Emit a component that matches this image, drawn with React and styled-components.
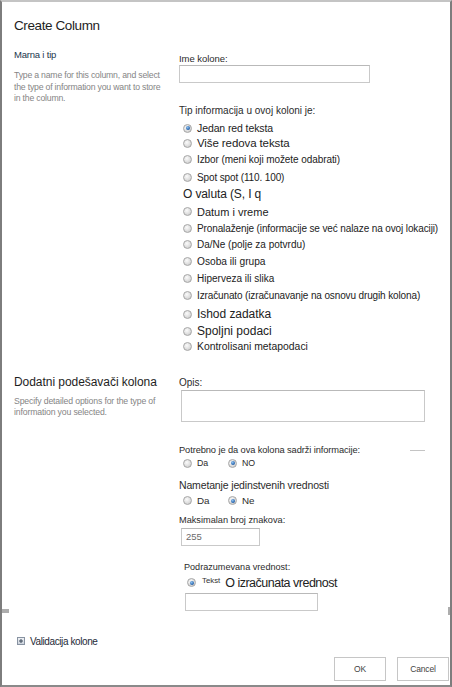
import React from 'react';
import styled, { createGlobalStyle } from 'styled-components';

const GlobalStyle = createGlobalStyle`
  html, body {
    margin: 0;
    padding: 0;
    background: #fff;
  }
  body {
    font-family: "Liberation Sans", Arial, sans-serif;
  }
`;

const Window = styled.div`
  box-sizing: border-box;
  width: 452px;
  height: 687px;
  border-top: 2px solid #c4c4c4;
  border-left: 2px solid #7d7d7d;
  border-right: 2px solid #7d7d7d;
  border-bottom: 2px solid #8a8a8a;
  padding-top: 13.5px;
  display: flex;
  flex-direction: column;
  overflow: hidden;
  color: #262626;
`;

const Title = styled.h1`
  margin: 0;
  padding-left: 12px;
  font-size: 13.5px;
  font-weight: normal;
  letter-spacing: -0.4px;
  line-height: 20px;
  color: #1e1e1e;
`;

const Section = styled.section`
  display: grid;
  grid-template-columns: 165px 1fr;
  padding-left: 12px;
  margin-top: ${p => p.$mt}px;
`;

const InfoCol = styled.div`
  padding-top: ${p => p.$pt || 0}px;
`;

const FieldsCol = styled.div`
  display: flex;
  flex-direction: column;
  align-items: flex-start;
  padding-top: ${p => p.$pt || 0}px;
`;

const SectionTitle = styled.div`
  font-size: ${p => p.$size}px;
  letter-spacing: ${p => p.$ls || 0}px;
  line-height: ${p => p.$lh}px;
  color: ${p => p.$color || '#1e1e1e'};
  white-space: nowrap;
`;

const SectionDesc = styled.div`
  margin-top: ${p => p.$mt}px;
  font-size: 8.7px;
  letter-spacing: ${p => p.$ls}px;
  line-height: ${p => p.$lh}px;
  color: #858585;
  white-space: nowrap;
`;

const FieldLabel = styled.div`
  display: flex;
  align-items: center;
  margin-top: ${p => p.$mt || 0}px;
  margin-left: ${p => p.$ml || 0}px;
  font-size: ${p => p.$size || 10}px;
  letter-spacing: ${p => p.$ls || 0}px;
  line-height: ${p => p.$lh || 12}px;
  color: #2b2b2b;
  white-space: nowrap;
`;

const Rule = styled.span`
  width: 15px;
  height: 1px;
  margin-left: 50px;
  background: #c4c4c4;
`;

const TextBox = styled.input`
  box-sizing: border-box;
  display: block;
  width: ${p => p.$w}px;
  height: 18px;
  margin: ${p => p.$mt || 0}px 0 0 ${p => p.$ml || 0}px;
  padding: 0 4px;
  border: 1px solid #c9c9c9;
  border-top-color: #b9b9b9;
  background: #fff;
  font-family: "Liberation Sans", Arial, sans-serif;
  font-size: 9.5px;
  color: #6a6a6a;
  outline: none;
`;

const TextArea = styled.textarea`
  box-sizing: border-box;
  display: block;
  width: 244px;
  height: 32px;
  margin: 1px 0 0 2px;
  border: 1px solid #c9c9c9;
  border-top-color: #b9b9b9;
  resize: none;
  outline: none;
  background: #fff;
`;

const Radio = styled.span`
  box-sizing: border-box;
  position: relative;
  flex: none;
  width: 9px;
  height: 9px;
  border-radius: 50%;
  border: 1px solid #a6a6a6;
  background: radial-gradient(circle at 40% 35%, #fbfbfb 0%, #dedede 55%, #c2c2c2 100%);

  &::after {
    content: '';
    display: ${p => (p.$checked ? 'block' : 'none')};
    position: absolute;
    left: 1.5px;
    top: 1.5px;
    width: 4px;
    height: 4px;
    border-radius: 50%;
    background: radial-gradient(circle at 40% 35%, #8cc0f0 0%, #2a66ad 65%, #1b4a85 100%);
  }
`;

const TypeOption = styled.label`
  display: flex;
  align-items: center;
  gap: 5px;
  height: 16px;
  margin-top: ${p => p.$mt || 0}px;
  padding-left: 4px;
  white-space: nowrap;
`;

const OptionText = styled.span`
  font-size: ${p => p.$size}px;
  letter-spacing: ${p => p.$ls || 0}px;
  color: #222;
`;

const ChoiceRow = styled.div`
  display: flex;
  align-items: center;
  height: ${p => p.$h}px;
  margin-top: ${p => p.$mt}px;
  padding-left: ${p => p.$pl || 4}px;
`;

const Choice = styled.label`
  display: flex;
  align-items: center;
  gap: 5px;
  width: 45px;
`;

const ChoiceText = styled.span`
  font-size: ${p => p.$size}px;
  letter-spacing: ${p => p.$ls || 0}px;
  color: #2b2b2b;
`;

const DefaultValueRow = styled.div`
  display: flex;
  align-items: center;
  height: 16px;
  margin-top: 1.7px;
  padding-left: 8px;
`;

const TinyText = styled.span`
  margin: -4px 5px 0 6px;
  font-size: 7.8px;
  color: #333;
`;

const BigText = styled.span`
  font-size: 12.5px;
  letter-spacing: -0.5px;
  color: #222;
`;

const ScrollMarks = styled.div`
  display: flex;
  justify-content: space-between;
  align-items: center;
  height: 8px;
  margin-top: -4px;
`;

const Mark = styled.span`
  width: ${p => p.$w}px;
  height: ${p => p.$h}px;
  background: #adadad;
`;

const Expander = styled.div`
  display: flex;
  align-items: center;
  gap: 5px;
  height: 14px;
  margin-top: 19.3px;
  padding-left: 15px;
  font-size: 10px;
  letter-spacing: -0.4px;
  color: #1e2a38;
`;

const ButtonRow = styled.div`
  display: flex;
  justify-content: flex-end;
  gap: 11px;
  margin-top: 8.7px;
  padding-right: 1px;
`;

const Button = styled.button`
  box-sizing: border-box;
  width: 52px;
  height: 24px;
  padding: 0;
  border: 1px solid #c6c6c6;
  background: #fff;
  font-family: "Liberation Sans", Arial, sans-serif;
  font-size: 8.5px;
  letter-spacing: -0.2px;
  color: #444;
`;

const PlusIcon = () => (
  <svg width="8" height="8" viewBox="0 0 8 8">
    <defs>
      <linearGradient id="pl" x1="0" y1="0" x2="0" y2="1">
        <stop offset="0" stopColor="#f2f4f7" />
        <stop offset="1" stopColor="#c9d0da" />
      </linearGradient>
    </defs>
    <rect x="0.5" y="0.5" width="7" height="7" fill="url(#pl)" stroke="#8893a2" />
    <path d="M2 4h4M4 2v4" stroke="#3b4858" strokeWidth="1" />
  </svg>
);

const types = [
  { label: 'Jedan red teksta', size: 10.5, ls: -0.1, mt: 3, checked: true },
  { label: 'Više redova teksta', size: 11.5, ls: -0.1, mt: -1 },
  { label: 'Izbor (meni koji možete odabrati)', size: 10, ls: -0.08, mt: 0 },
  { label: 'Spot spot (110. 100)', size: 10, ls: -0.13, mt: 2 },
  { label: 'O valuta (S, I q', size: 12, ls: -0.12, mt: 1, noRadio: true },
  { label: 'Datum i vreme', size: 11, ls: 0, mt: 1.5 },
  { label: 'Pronalaženje (informacije se već nalaze na ovoj lokaciji)', size: 10, ls: -0.12, mt: 0.5 },
  { label: 'Da/Ne (polje za potvrdu)', size: 10, ls: 0, mt: 0 },
  { label: 'Osoba ili grupa', size: 10.2, ls: 0, mt: 1 },
  { label: 'Hiperveza ili slika', size: 10, ls: 0, mt: 1 },
  { label: 'Izračunato (izračunavanje na osnovu drugih kolona)', size: 10, ls: -0.13, mt: 1.5 },
  { label: 'Ishod zadatka', size: 12, ls: -0.05, mt: 2.5 },
  { label: 'Spoljni podaci', size: 12, ls: 0, mt: 1 },
  { label: 'Kontrolisani metapodaci', size: 10.4, ls: 0, mt: -1 },
];

export default function App() {
  return (
    <>
      <GlobalStyle />
      <Window>
        <Title>Create Column</Title>

        <Section $mt={12.5}>
          <InfoCol>
            <SectionTitle $size={9.5} $ls={-0.2} $lh={14} $color="#22364c">
              Marna i tip
            </SectionTitle>
            <SectionDesc $mt={8} $lh={11.5} $ls={-0.2}>
              Type a name for this column, and select
              <br />
              the type of information you want to store
              <br />
              in the column.
            </SectionDesc>
          </InfoCol>

          <FieldsCol $pt={4.5}>
            <FieldLabel $size={9.5} $ls={-0.05}>Ime kolone:</FieldLabel>
            <TextBox $w={191} $mt={0.5} />
            <FieldLabel $size={10} $mt={22}>Tip informacija u ovoj koloni je:</FieldLabel>
            {types.map(t => (
              <TypeOption key={t.label} $mt={t.mt}>
                {!t.noRadio && <Radio $checked={t.checked} />}
                <OptionText $size={t.size} $ls={t.ls}>{t.label}</OptionText>
              </TypeOption>
            ))}
          </FieldsCol>
        </Section>

        <Section $mt={20}>
          <InfoCol>
            <SectionTitle $size={12} $ls={-0.05} $lh={16}>
              Dodatni podešavači kolona
            </SectionTitle>
            <SectionDesc $mt={5.5} $lh={11} $ls={-0.15}>
              Specify detailed options for the type of
              <br />
              information you selected.
            </SectionDesc>
          </InfoCol>

          <FieldsCol $pt={3}>
            <FieldLabel $size={10}>Opis:</FieldLabel>
            <TextArea />
            <FieldLabel $size={9.3} $ls={-0.1} $mt={22}>
              Potrebno je da ova kolona sadrži informacije:
              <Rule />
            </FieldLabel>
            <ChoiceRow $h={12} $mt={1}>
              <Choice>
                <Radio />
                <ChoiceText $size={8.8}>Da</ChoiceText>
              </Choice>
              <Choice>
                <Radio $checked />
                <ChoiceText $size={8.8}>NO</ChoiceText>
              </Choice>
            </ChoiceRow>
            <FieldLabel $size={10.5} $ls={-0.15} $lh={14} $mt={9}>
              Nametanje jedinstvenih vrednosti
            </FieldLabel>
            <ChoiceRow $h={14} $mt={1.7}>
              <Choice>
                <Radio />
                <ChoiceText $size={9.8}>Da</ChoiceText>
              </Choice>
              <Choice>
                <Radio $checked />
                <ChoiceText $size={9.8}>Ne</ChoiceText>
              </Choice>
            </ChoiceRow>
            <FieldLabel $size={9.2} $mt={6.3}>Maksimalan broj znakova:</FieldLabel>
            <TextBox $w={79} $ml={2} $mt={2} defaultValue="255" />
            <FieldLabel $size={9.1} $mt={15} $ml={5}>Podrazumevana vrednost:</FieldLabel>
            <DefaultValueRow>
              <Radio $checked />
              <TinyText>Tekst</TinyText>
              <BigText>O izračunata vrednost</BigText>
            </DefaultValueRow>
            <TextBox $w={133} $ml={6} $mt={2.3} />
          </FieldsCol>
        </Section>

        <ScrollMarks>
          <Mark $w={7} $h={4} />
          <Mark $w={2} $h={8} />
        </ScrollMarks>

        <Expander>
          <PlusIcon />
          <span>Validacija kolone</span>
        </Expander>

        <ButtonRow>
          <Button>OK</Button>
          <Button>Cancel</Button>
        </ButtonRow>
      </Window>
    </>
  );
}
